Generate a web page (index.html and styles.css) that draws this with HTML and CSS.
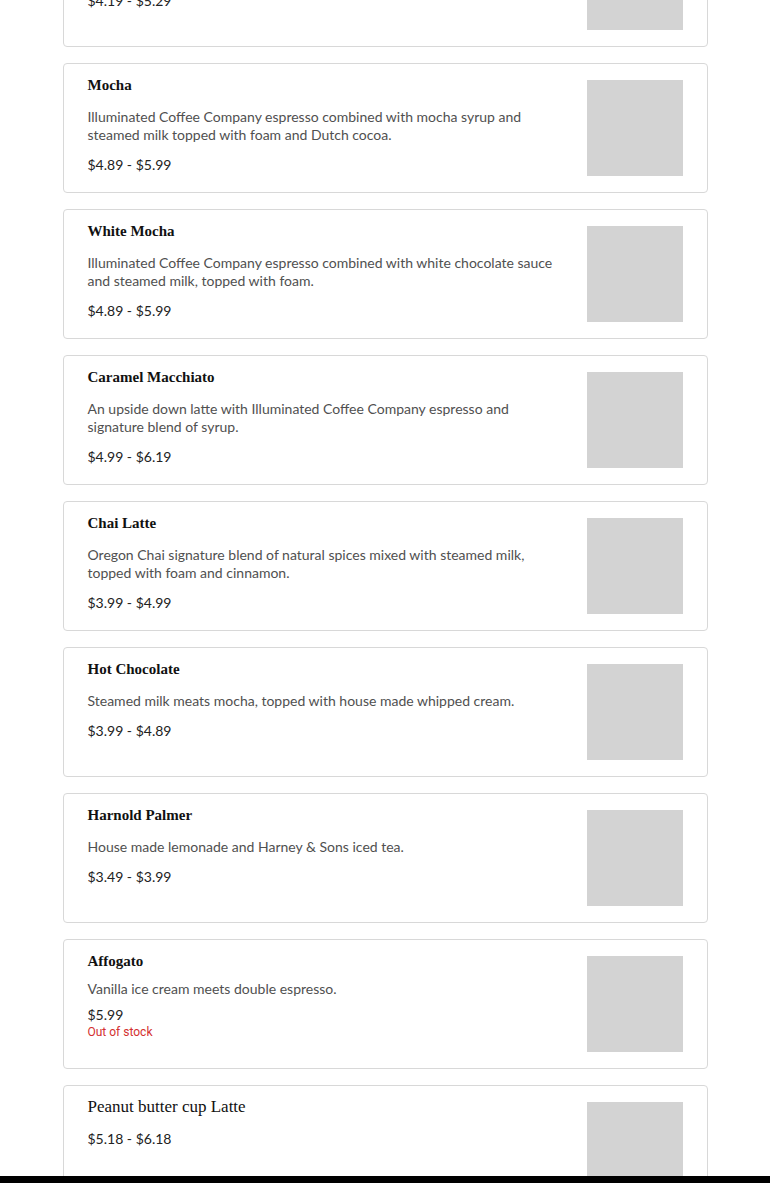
FILE: index.html
```html
<!DOCTYPE html>
<html lang="en">
<head>
<meta charset="utf-8">
<title>Menu</title>
<link rel="stylesheet" href="styles.css">
</head>
<body>
<main class="menu">
  <article class="card card--first">
    <div class="info">
      <h3 class="title">Latte</h3>
      <p class="desc">Illuminated Coffee Company espresso with steamed milk and foam.</p>
      <p class="price">$4.19 - $5.29</p>
    </div>
    <div class="thumb"></div>
  </article>
  <article class="card">
    <div class="info">
      <h3 class="title">Mocha</h3>
      <p class="desc">Illuminated Coffee Company espresso combined with mocha syrup and steamed milk topped with foam and Dutch cocoa.</p>
      <p class="price">$4.89 - $5.99</p>
    </div>
    <div class="thumb"></div>
  </article>
  <article class="card">
    <div class="info">
      <h3 class="title">White Mocha</h3>
      <p class="desc">Illuminated Coffee Company espresso combined with white chocolate sauce and steamed milk, topped with foam.</p>
      <p class="price">$4.89 - $5.99</p>
    </div>
    <div class="thumb"></div>
  </article>
  <article class="card">
    <div class="info">
      <h3 class="title">Caramel Macchiato</h3>
      <p class="desc">An upside down latte with Illuminated Coffee Company espresso and signature blend of syrup.</p>
      <p class="price">$4.99 - $6.19</p>
    </div>
    <div class="thumb"></div>
  </article>
  <article class="card">
    <div class="info">
      <h3 class="title">Chai Latte</h3>
      <p class="desc">Oregon Chai signature blend of natural spices mixed with steamed milk, topped with foam and cinnamon.</p>
      <p class="price">$3.99 - $4.99</p>
    </div>
    <div class="thumb"></div>
  </article>
  <article class="card">
    <div class="info">
      <h3 class="title">Hot Chocolate</h3>
      <p class="desc">Steamed milk meats mocha, topped with house made whipped cream.</p>
      <p class="price">$3.99 - $4.89</p>
    </div>
    <div class="thumb"></div>
  </article>
  <article class="card">
    <div class="info">
      <h3 class="title">Harnold Palmer</h3>
      <p class="desc">House made lemonade and Harney &amp; Sons iced tea.</p>
      <p class="price">$3.49 - $3.99</p>
    </div>
    <div class="thumb"></div>
  </article>
  <article class="card card--soldout">
    <div class="info">
      <h3 class="title">Affogato</h3>
      <p class="desc">Vanilla ice cream meets double espresso.</p>
      <p class="price">$5.99</p>
      <p class="stock">Out of stock</p>
    </div>
    <div class="thumb"></div>
  </article>
  <article class="card card--plain">
    <div class="info">
      <h3 class="title">Peanut butter cup Latte</h3>
      <p class="price">$5.18 - $6.18</p>
    </div>
    <div class="thumb"></div>
  </article>
</main>
<div class="bottom-bar"></div>
</body>
</html>
```
FILE: styles.css
```css
html, body {
  margin: 0;
  padding: 0;
  background: #ffffff;
}

body {
  font-family: "Lato", "Liberation Sans", sans-serif;
  overflow: hidden;
}

.menu {
  width: 645px;
  margin: 0 auto;
  display: flex;
  flex-direction: column;
  gap: 16px;
}

.card {
  box-sizing: border-box;
  height: 130px;
  border: 1px solid #d8d8d8;
  border-radius: 4px;
  padding: 12px 24px 12px 24px;
  display: flex;
  gap: 24px;
}

.card--first {
  margin-top: -83px;
}

.info {
  flex: 1;
  min-width: 0;
}

.thumb {
  width: 96px;
  height: 96px;
  margin-top: 4px;
  background: #d3d3d3;
  flex: none;
}

.title {
  margin: 0 0 14px 0;
  font-family: "Liberation Serif", serif;
  font-weight: bold;
  font-size: 15px;
  line-height: 18px;
  color: #111111;
}

.desc {
  margin: 0 0 12px 0;
  font-size: 14px;
  line-height: 18px;
  color: #505050;
}

.price {
  margin: 0;
  font-size: 14px;
  line-height: 18px;
  color: #222222;
}

.card--soldout .title {
  margin-bottom: 10px;
}

.card--soldout .desc {
  margin-bottom: 8px;
}

.stock {
  margin: 0;
  font-family: "Roboto", "Liberation Sans", sans-serif;
  font-size: 12px;
  line-height: 16px;
  color: #d32f2f;
}

.card--plain .title {
  font-weight: normal;
  font-size: 17px;
}

.bottom-bar {
  position: fixed;
  left: 0;
  right: 0;
  bottom: 0;
  height: 7px;
  background: #000000;
}
```
